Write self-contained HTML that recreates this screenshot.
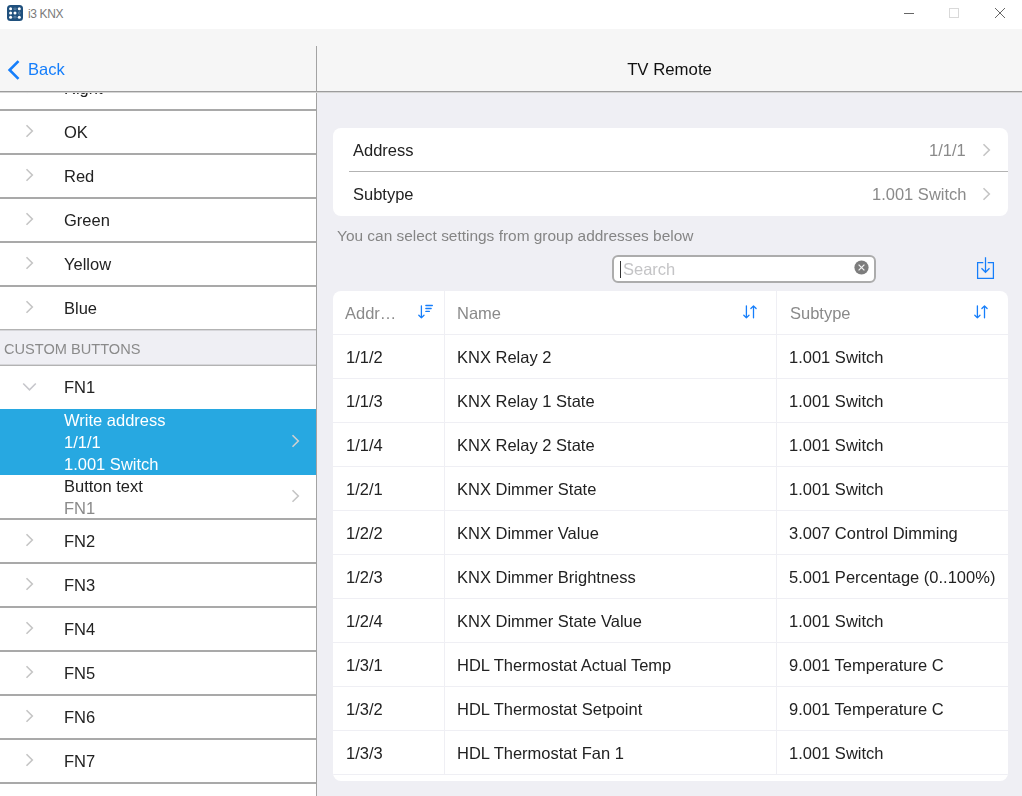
<!DOCTYPE html>
<html><head><meta charset="utf-8">
<style>
*{box-sizing:border-box;margin:0;padding:0}
html,body{width:1022px;height:796px;overflow:hidden;background:#fff;font-family:"Liberation Sans",sans-serif;color:#000}
.abs{position:absolute}
.t{position:absolute;white-space:pre;font-size:16.5px;line-height:20px;will-change:transform;color:#222}
.g{color:#8a8a8a}
.sep{position:absolute;left:0;width:316px;height:2px;background:#a9a9a9}
.tl{position:absolute;background:#efeff4}
</style></head><body>

<div class="abs" style="left:0;top:0;width:1022px;height:29px;background:#fff"></div>
<svg class="abs" style="left:7px;top:5px" width="16" height="16" viewBox="0 0 16 16">
<rect x="0" y="0" width="16" height="16" rx="3.5" fill="#1f507d"/>
<g fill="#fff"><circle cx="3.6" cy="3.7" r="1.5"/><ellipse cx="8" cy="3.9" rx="1.5" ry="0.8" fill="none" stroke="#8fa8c0" stroke-width="0.5"/><circle cx="12.3" cy="3.7" r="1.5"/>
<circle cx="3.6" cy="8" r="1.5"/><circle cx="8" cy="8" r="1.5"/><ellipse cx="12.3" cy="8" rx="0.8" ry="1.5" fill="none" stroke="#8fa8c0" stroke-width="0.5"/>
<circle cx="3.6" cy="12.3" r="1.5"/><ellipse cx="8" cy="12.1" rx="1.5" ry="0.8" fill="none" stroke="#8fa8c0" stroke-width="0.5"/><circle cx="12.3" cy="12.3" r="1.5"/></g>
</svg>
<div class="abs" style="left:28px;top:6.2px;font-size:12px;line-height:16px;letter-spacing:-0.35px;color:#7a7a7a;white-space:pre">i3 KNX</div>
<div class="abs" style="left:904px;top:13px;width:10px;height:1px;background:#666"></div>
<div class="abs" style="left:949px;top:8px;width:10px;height:10px;border:1px solid #d9d9d9"></div>
<svg class="abs" style="left:994px;top:7px" width="12" height="12" viewBox="0 0 12 12"><path d="M1 1 L11 11 M11 1 L1 11" stroke="#666" stroke-width="1"/></svg>
<div class="abs" style="left:0;top:29px;width:1022px;height:62px;background:#f6f6f6"></div>
<svg class="abs" style="left:6px;top:59px" width="15" height="22" viewBox="0 0 15 22"><path d="M12.5 2.1 L3.6 11 L12.5 19.9" fill="none" stroke="#157efb" stroke-width="2.6"/></svg>
<div class="t" style="left:28px;top:59.00px;color:#157efb">Back</div>
<div class="t" style="left:0px;top:59.60px;left:317px;width:705px;text-align:center;font-size:16.75px;color:#111">TV Remote</div>
<div class="abs" style="left:0;top:92px;width:316px;height:704px;background:#fff;overflow:hidden">
<div class="t" style="left:64px;top:-13.70px;">Right</div>
<svg class="abs" style="left:25px;top:-11.700000000000003px" width="9" height="14" viewBox="0 0 9 14"><path d="M1.5 1.2 L7.3 7 L1.5 12.8" fill="none" stroke="#c5c5c5" stroke-width="1.6"/></svg>
<div class="sep" style="top:17px"></div>
<div class="t" style="left:64px;top:30.30px;">OK</div>
<svg class="abs" style="left:25px;top:32.3px" width="9" height="14" viewBox="0 0 9 14"><path d="M1.5 1.2 L7.3 7 L1.5 12.8" fill="none" stroke="#c5c5c5" stroke-width="1.6"/></svg>
<div class="sep" style="top:61px"></div>
<div class="t" style="left:64px;top:74.30px;">Red</div>
<svg class="abs" style="left:25px;top:76.30000000000001px" width="9" height="14" viewBox="0 0 9 14"><path d="M1.5 1.2 L7.3 7 L1.5 12.8" fill="none" stroke="#c5c5c5" stroke-width="1.6"/></svg>
<div class="sep" style="top:105px"></div>
<div class="t" style="left:64px;top:118.30px;">Green</div>
<svg class="abs" style="left:25px;top:120.30000000000001px" width="9" height="14" viewBox="0 0 9 14"><path d="M1.5 1.2 L7.3 7 L1.5 12.8" fill="none" stroke="#c5c5c5" stroke-width="1.6"/></svg>
<div class="sep" style="top:149px"></div>
<div class="t" style="left:64px;top:162.30px;">Yellow</div>
<svg class="abs" style="left:25px;top:164.3px" width="9" height="14" viewBox="0 0 9 14"><path d="M1.5 1.2 L7.3 7 L1.5 12.8" fill="none" stroke="#c5c5c5" stroke-width="1.6"/></svg>
<div class="sep" style="top:193px"></div>
<div class="t" style="left:64px;top:206.30px;">Blue</div>
<svg class="abs" style="left:25px;top:208.3px" width="9" height="14" viewBox="0 0 9 14"><path d="M1.5 1.2 L7.3 7 L1.5 12.8" fill="none" stroke="#c5c5c5" stroke-width="1.6"/></svg>
<div class="sep" style="top:237px"></div>
<div class="abs" style="left:0;top:237px;width:316px;height:37px;background:#efeff4;border-top:1px solid #b3b3b3;border-bottom:1px solid #b3b3b3"></div>
<div class="abs" style="left:0;top:238px;width:316px;height:1px;background:#d6d6da"></div>
<div class="abs" style="left:0;top:272px;width:316px;height:1px;background:#d6d6da"></div>
<div class="t" style="left:3.5px;top:246.80px;font-size:14.6px;line-height:20px;color:#8a8a8a">CUSTOM BUTTONS</div>
<div class="t" style="left:64px;top:284.80px;">FN1</div>
<svg class="abs" style="left:22px;top:290px" width="15" height="10" viewBox="0 0 15 10"><path d="M1.2 1.5 L7.5 7.8 L13.8 1.5" fill="none" stroke="#c7c7cc" stroke-width="1.6"/></svg>
<div class="abs" style="left:0;top:317px;width:316px;height:66px;background:#27a8e1"></div>
<div class="t" style="left:63.5px;top:318.10px;color:#fff">Write address</div>
<div class="t" style="left:63.5px;top:340.00px;color:#fff">1/1/1</div>
<div class="t" style="left:63.5px;top:362.00px;color:#fff">1.001 Switch</div>
<svg class="abs" style="left:291px;top:342.4px" width="9" height="14" viewBox="0 0 9 14"><path d="M1.5 1.2 L7.3 7 L1.5 12.8" fill="none" stroke="#d0d0d0" stroke-width="1.6"/></svg>
<div class="t" style="left:63.5px;top:384.20px;">Button text</div>
<div class="t" style="left:63.5px;top:405.80px;color:#8a8a8a">FN1</div>
<svg class="abs" style="left:291px;top:397px" width="9" height="14" viewBox="0 0 9 14"><path d="M1.5 1.2 L7.3 7 L1.5 12.8" fill="none" stroke="#c5c5c5" stroke-width="1.6"/></svg>
<div class="sep" style="top:426px"></div>
<div class="t" style="left:64px;top:439.30px;">FN2</div>
<svg class="abs" style="left:25px;top:441.29999999999995px" width="9" height="14" viewBox="0 0 9 14"><path d="M1.5 1.2 L7.3 7 L1.5 12.8" fill="none" stroke="#c5c5c5" stroke-width="1.6"/></svg>
<div class="sep" style="top:470px"></div>
<div class="t" style="left:64px;top:483.30px;">FN3</div>
<svg class="abs" style="left:25px;top:485.29999999999995px" width="9" height="14" viewBox="0 0 9 14"><path d="M1.5 1.2 L7.3 7 L1.5 12.8" fill="none" stroke="#c5c5c5" stroke-width="1.6"/></svg>
<div class="sep" style="top:514px"></div>
<div class="t" style="left:64px;top:527.30px;">FN4</div>
<svg class="abs" style="left:25px;top:529.3px" width="9" height="14" viewBox="0 0 9 14"><path d="M1.5 1.2 L7.3 7 L1.5 12.8" fill="none" stroke="#c5c5c5" stroke-width="1.6"/></svg>
<div class="sep" style="top:558px"></div>
<div class="t" style="left:64px;top:571.30px;">FN5</div>
<svg class="abs" style="left:25px;top:573.3px" width="9" height="14" viewBox="0 0 9 14"><path d="M1.5 1.2 L7.3 7 L1.5 12.8" fill="none" stroke="#c5c5c5" stroke-width="1.6"/></svg>
<div class="sep" style="top:602px"></div>
<div class="t" style="left:64px;top:615.30px;">FN6</div>
<svg class="abs" style="left:25px;top:617.3px" width="9" height="14" viewBox="0 0 9 14"><path d="M1.5 1.2 L7.3 7 L1.5 12.8" fill="none" stroke="#c5c5c5" stroke-width="1.6"/></svg>
<div class="sep" style="top:646px"></div>
<div class="t" style="left:64px;top:659.30px;">FN7</div>
<svg class="abs" style="left:25px;top:661.3px" width="9" height="14" viewBox="0 0 9 14"><path d="M1.5 1.2 L7.3 7 L1.5 12.8" fill="none" stroke="#c5c5c5" stroke-width="1.6"/></svg>
<div class="sep" style="top:690px"></div>
</div>
<div class="abs" style="left:317px;top:92px;width:705px;height:704px;background:#efeff4"></div>
<div class="abs" style="left:0;top:91px;width:1022px;height:1px;background:#9c9c9c"></div>
<div class="abs" style="left:316px;top:46px;width:1px;height:750px;background:#a3a3a3"></div>
<div class="abs" style="left:0;top:92px;width:1022px;height:1px;background:#d6d6d6"></div>
<div class="abs" style="left:333px;top:128px;width:675px;height:88px;background:#fff;border-radius:8px"></div>
<div class="t" style="left:353px;top:139.90px;">Address</div>
<div class="t" style="left:0px;top:139.90px;left:auto;right:56px;color:#8a8a8a">1/1/1</div>
<svg class="abs" style="left:982px;top:142.5px" width="9" height="14" viewBox="0 0 9 14"><path d="M1.5 1.2 L7.3 7 L1.5 12.8" fill="none" stroke="#c5c5c5" stroke-width="1.6"/></svg>
<div class="abs" style="left:349px;top:171px;width:659px;height:1px;background:#b3b3b3"></div>
<div class="t" style="left:353px;top:183.90px;">Subtype</div>
<div class="t" style="left:0px;top:183.90px;left:auto;right:56px;color:#8a8a8a">1.001 Switch</div>
<svg class="abs" style="left:982px;top:186.5px" width="9" height="14" viewBox="0 0 9 14"><path d="M1.5 1.2 L7.3 7 L1.5 12.8" fill="none" stroke="#c5c5c5" stroke-width="1.6"/></svg>
<div class="t" style="left:337.2px;top:226.10px;font-size:15.45px;color:#858585">You can select settings from group addresses below</div>
<div class="abs" style="left:612px;top:255px;width:264px;height:28px;background:#fff;border:2px solid #acacac;border-radius:6px"></div>
<div class="abs" style="left:620px;top:261px;width:1px;height:17px;background:#333"></div>
<div class="t" style="left:623px;top:259.20px;color:#c4c4c6">Search</div>
<svg class="abs" style="left:854.1px;top:259.8px" width="15" height="15" viewBox="0 0 15 15"><circle cx="7.5" cy="7.5" r="7.1" fill="#7d7d7d"/><path d="M4.6 4.6 L10.4 10.4 M10.4 4.6 L4.6 10.4" stroke="#f4f4f4" stroke-width="1.2"/></svg>
<svg class="abs" style="left:975px;top:256px" width="21" height="25" viewBox="0 0 21 25"><path d="M8.3 6.5 H2.6 V22.4 H18.4 V6.5 H12.7" fill="none" stroke="#157efb" stroke-width="1.25"/><path d="M10.5 1.3 V16.3 M6.5 12.3 L10.5 16.3 L14.5 12.3" fill="none" stroke="#157efb" stroke-width="1.25"/></svg>
<div class="abs" style="left:333px;top:291px;width:675px;height:490px;background:#fff;border-radius:8px;overflow:hidden">
<div class="tl" style="left:111px;top:0;width:1px;height:484px"></div>
<div class="tl" style="left:443px;top:0;width:1px;height:484px"></div>
<div class="tl" style="left:0;top:43px;width:675px;height:1px"></div>
<div class="tl" style="left:0;top:87px;width:675px;height:1px"></div>
<div class="tl" style="left:0;top:131px;width:675px;height:1px"></div>
<div class="tl" style="left:0;top:175px;width:675px;height:1px"></div>
<div class="tl" style="left:0;top:219px;width:675px;height:1px"></div>
<div class="tl" style="left:0;top:263px;width:675px;height:1px"></div>
<div class="tl" style="left:0;top:307px;width:675px;height:1px"></div>
<div class="tl" style="left:0;top:351px;width:675px;height:1px"></div>
<div class="tl" style="left:0;top:395px;width:675px;height:1px"></div>
<div class="tl" style="left:0;top:439px;width:675px;height:1px"></div>
<div class="tl" style="left:0;top:483px;width:675px;height:1px"></div>
<div class="t" style="left:12px;top:11.70px;color:#8a8a8a">Addr…</div>
<div class="t" style="left:124px;top:11.70px;color:#8a8a8a">Name</div>
<div class="t" style="left:456.5px;top:11.70px;color:#8a8a8a">Subtype</div>
<svg class="abs" style="left:84px;top:13px" width="18" height="16" viewBox="0 0 18 16"><g fill="none" stroke="#157efb" stroke-width="1.3" stroke-linecap="round" stroke-linejoin="round"><path d="M4.4 1.85 V13.85 M1.8 11.25 L4.4 13.85 L7.0 11.25"/><path d="M8.85 1.5 H15.35 M8.85 4.5 H14.15 M8.85 7.4 H12.35"/></g></svg>
<svg class="abs" style="left:409px;top:13px" width="18" height="16" viewBox="0 0 18 16"><g fill="none" stroke="#157efb" stroke-width="1.3" stroke-linecap="round" stroke-linejoin="round"><path d="M4.4 1.85 V13.85 M1.8 11.25 L4.4 13.85 L7.0 11.25"/><path d="M11.5 13.85 V1.85 M8.9 4.45 L11.5 1.85 L14.1 4.45"/></g></svg>
<svg class="abs" style="left:640px;top:13px" width="18" height="16" viewBox="0 0 18 16"><g fill="none" stroke="#157efb" stroke-width="1.3" stroke-linecap="round" stroke-linejoin="round"><path d="M4.4 1.85 V13.85 M1.8 11.25 L4.4 13.85 L7.0 11.25"/><path d="M11.5 13.85 V1.85 M8.9 4.45 L11.5 1.85 L14.1 4.45"/></g></svg>
<div class="t" style="left:12.5px;top:56.30px;">1/1/2</div>
<div class="t" style="left:124px;top:56.30px;">KNX Relay 2</div>
<div class="t" style="left:456px;top:56.30px;">1.001 Switch</div>
<div class="t" style="left:12.5px;top:100.30px;">1/1/3</div>
<div class="t" style="left:124px;top:100.30px;">KNX Relay 1 State</div>
<div class="t" style="left:456px;top:100.30px;">1.001 Switch</div>
<div class="t" style="left:12.5px;top:144.30px;">1/1/4</div>
<div class="t" style="left:124px;top:144.30px;">KNX Relay 2 State</div>
<div class="t" style="left:456px;top:144.30px;">1.001 Switch</div>
<div class="t" style="left:12.5px;top:188.30px;">1/2/1</div>
<div class="t" style="left:124px;top:188.30px;">KNX Dimmer State</div>
<div class="t" style="left:456px;top:188.30px;">1.001 Switch</div>
<div class="t" style="left:12.5px;top:232.30px;">1/2/2</div>
<div class="t" style="left:124px;top:232.30px;">KNX Dimmer Value</div>
<div class="t" style="left:456px;top:232.30px;">3.007 Control Dimming</div>
<div class="t" style="left:12.5px;top:276.30px;">1/2/3</div>
<div class="t" style="left:124px;top:276.30px;">KNX Dimmer Brightness</div>
<div class="t" style="left:456px;top:276.30px;">5.001 Percentage (0..100%)</div>
<div class="t" style="left:12.5px;top:320.30px;">1/2/4</div>
<div class="t" style="left:124px;top:320.30px;">KNX Dimmer State Value</div>
<div class="t" style="left:456px;top:320.30px;">1.001 Switch</div>
<div class="t" style="left:12.5px;top:364.30px;">1/3/1</div>
<div class="t" style="left:124px;top:364.30px;">HDL Thermostat Actual Temp</div>
<div class="t" style="left:456px;top:364.30px;">9.001 Temperature C</div>
<div class="t" style="left:12.5px;top:408.30px;">1/3/2</div>
<div class="t" style="left:124px;top:408.30px;">HDL Thermostat Setpoint</div>
<div class="t" style="left:456px;top:408.30px;">9.001 Temperature C</div>
<div class="t" style="left:12.5px;top:452.30px;">1/3/3</div>
<div class="t" style="left:124px;top:452.30px;">HDL Thermostat Fan 1</div>
<div class="t" style="left:456px;top:452.30px;">1.001 Switch</div>
</div>
</body></html>
